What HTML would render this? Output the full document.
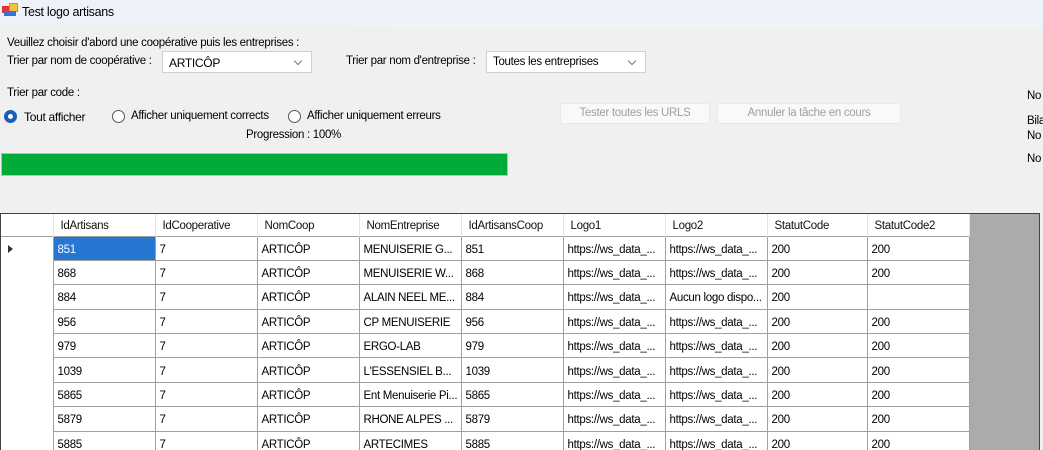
<!DOCTYPE html>
<html><head><meta charset="utf-8"><style>
*{margin:0;padding:0;box-sizing:border-box}
body{width:1043px;height:450px;overflow:hidden;background:#f0f0f0;font-family:"Liberation Sans",sans-serif;font-size:11.5px;color:#000;position:relative;letter-spacing:-0.3px}
.a{position:absolute;white-space:nowrap}
.title{left:0;top:0;width:1043px;height:28px;background:linear-gradient(90deg,#eef2f8,#eef3fa);}
.combo{position:absolute;background:#fff;border:1px solid #d0d0d0;height:22px;padding:4px 6px;font-size:12px}
.combo:after{content:"";position:absolute;right:10px;top:6px;width:5px;height:5px;border-right:1px solid #777;border-bottom:1px solid #777;transform:rotate(45deg)}
.btn{position:absolute;background:#f9f9f9;border:1px solid #e8e8e8;border-radius:3px;height:21px;color:#a0a0a0;text-align:center;line-height:19px}
.radio{position:absolute;width:13px;height:13px;border-radius:50%;border:1px solid #555;background:#fff}
.grid{position:absolute;left:0;top:213px;width:1040px;height:237px;border:1px solid #444;border-bottom:none;background:#ababab;overflow:hidden}
table{border-collapse:collapse;table-layout:fixed;background:#fff;width:968px}
td{border:1px solid #a0a0a0;height:24.4px;padding:3px 4px 0;overflow:hidden;white-space:nowrap;font-size:11.5px;text-overflow:clip}
tr.h td{height:22px;border:none;border-right:1px solid #e4e4e4;padding:2px 0 0 7px;color:#111}
td.rh{border:none;border-right:1px solid #a0a0a0;background:#fff}
</style></head><body>
<div class="a title"></div>
<div class="a" style="left:2px;top:6px;width:9px;height:7px;background:#d33"></div>
<div class="a" style="left:9px;top:3px;width:9px;height:9px;background:#f2c23a;border:1px solid #b88"></div>
<div class="a" style="left:4px;top:11px;width:12px;height:5px;background:#3a6ed8"></div>
<div class="a" style="left:22px;top:5px;font-size:12.5px">Test logo artisans</div>
<div class="a" style="left:7px;top:37px">Veuillez choisir d'abord une coopérative puis les entreprises :</div>
<div class="a" style="left:7px;top:55px">Trier par nom de coopérative :</div>
<div class="combo" style="left:162px;top:51px;width:150px">ARTICÔP</div>
<div class="a" style="left:346px;top:55px">Trier par nom d'entreprise :</div>
<div class="combo" style="left:486px;top:51px;width:160px;font-size:11.5px">Toutes les entreprises</div>
<div class="a" style="left:7px;top:87px">Trier par code :</div>
<div class="radio" style="left:4px;top:110px;border:4px solid #1a5fb4"></div>
<div class="a" style="left:24px;top:110px;font-size:12px">Tout afficher</div>
<div class="radio" style="left:112px;top:110px"></div>
<div class="a" style="left:131px;top:110px">Afficher uniquement corrects</div>
<div class="radio" style="left:288px;top:110px"></div>
<div class="a" style="left:307px;top:110px">Afficher uniquement erreurs</div>
<div class="a" style="left:246px;top:129px">Progression : 100%</div>
<div class="a" style="left:1px;top:153px;width:507px;height:23px;background:#00ab3a;border:1px solid #bcbcbc"></div>
<div class="btn" style="left:560px;top:103px;width:150px">Tester toutes les URLS</div>
<div class="btn" style="left:717px;top:103px;width:184px">Annuler la tâche en cours</div>
<div class="a" style="left:1027px;top:90px">No</div>
<div class="a" style="left:1027px;top:115px">Bila</div>
<div class="a" style="left:1027px;top:130px">No</div>
<div class="a" style="left:1027px;top:153px">No</div>
<div class="grid"><table>
<colgroup><col style="width:52px"><col style="width:102px"><col style="width:102px"><col style="width:102px"><col style="width:102px"><col style="width:102px"><col style="width:102px"><col style="width:102px"><col style="width:100px"><col style="width:102px"></colgroup>
<tr class="h"><td class="rh" style="border-right:1px solid #e4e4e4"></td><td>IdArtisans</td><td>IdCooperative</td><td>NomCoop</td><td>NomEntreprise</td><td>IdArtisansCoop</td><td>Logo1</td><td>Logo2</td><td>StatutCode</td><td>StatutCode2</td></tr>
<tr><td class="rh" style="border-top:1px solid #a0a0a0"><span style="display:inline-block;border-left:5px solid #333;border-top:4px solid transparent;border-bottom:4px solid transparent;margin-left:3px"></span></td><td style="background:#2776d2;color:#fff">851</td><td>7</td><td>ARTICÔP</td><td>MENUISERIE G...</td><td>851</td><td>https://ws_data_...</td><td>https://ws_data_...</td><td>200</td><td>200</td></tr>
<tr><td class="rh"></td><td>868</td><td>7</td><td>ARTICÔP</td><td>MENUISERIE W...</td><td>868</td><td>https://ws_data_...</td><td>https://ws_data_...</td><td>200</td><td>200</td></tr>
<tr><td class="rh"></td><td>884</td><td>7</td><td>ARTICÔP</td><td>ALAIN NEEL ME...</td><td>884</td><td>https://ws_data_...</td><td>Aucun logo dispo...</td><td>200</td><td></td></tr>
<tr><td class="rh"></td><td>956</td><td>7</td><td>ARTICÔP</td><td>CP MENUISERIE</td><td>956</td><td>https://ws_data_...</td><td>https://ws_data_...</td><td>200</td><td>200</td></tr>
<tr><td class="rh"></td><td>979</td><td>7</td><td>ARTICÔP</td><td>ERGO-LAB</td><td>979</td><td>https://ws_data_...</td><td>https://ws_data_...</td><td>200</td><td>200</td></tr>
<tr><td class="rh"></td><td>1039</td><td>7</td><td>ARTICÔP</td><td>L'ESSENSIEL B...</td><td>1039</td><td>https://ws_data_...</td><td>https://ws_data_...</td><td>200</td><td>200</td></tr>
<tr><td class="rh"></td><td>5865</td><td>7</td><td>ARTICÔP</td><td>Ent Menuiserie Pi...</td><td>5865</td><td>https://ws_data_...</td><td>https://ws_data_...</td><td>200</td><td>200</td></tr>
<tr><td class="rh"></td><td>5879</td><td>7</td><td>ARTICÔP</td><td>RHONE ALPES ...</td><td>5879</td><td>https://ws_data_...</td><td>https://ws_data_...</td><td>200</td><td>200</td></tr>
<tr><td class="rh"></td><td>5885</td><td>7</td><td>ARTICÔP</td><td>ARTECIMES</td><td>5885</td><td>https://ws_data_...</td><td>https://ws_data_...</td><td>200</td><td>200</td></tr>
</table></div>
</body></html>
